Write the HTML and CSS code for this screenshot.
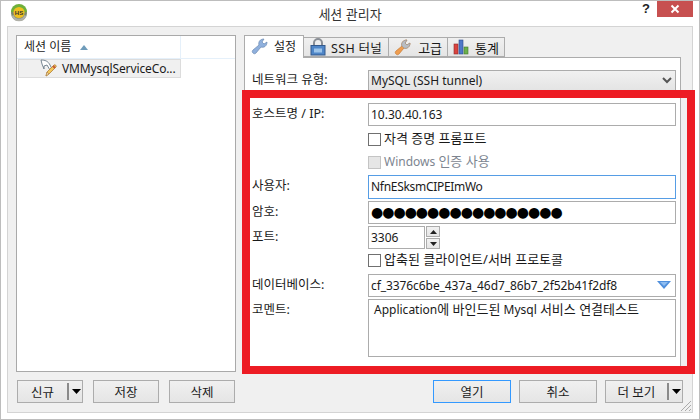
FILE: index.html
```html
<!DOCTYPE html>
<html lang="ko">
<head>
<meta charset="utf-8">
<title>세션 관리자</title>
<link rel="stylesheet" href="styles.css">
</head>
<body>
<div class="window">
  <header class="titlebar">
    <svg class="app-icon" width="18" height="18" viewBox="0 0 18 18"><circle cx="9" cy="9" r="8" fill="#7a8a70"/><path d="M1 8a8 8 0 0 1 16 0z" fill="#6fb03a"/><circle cx="9" cy="8.500" r="5.600" fill="#f0c020"/><path d="M1.500 12a8 8 0 0 0 15 0l-2-1a6 6 0 0 1-11 0z" fill="#b0b0a8"/><text x="9" y="11" class="app-icon-text" text-anchor="middle">HS</text></svg>
    <div class="title">세션 관리자</div>
    <div class="help">?</div>
    <div class="close"><svg width="10" height="10" viewBox="0 0 10 10"><path d="M1.500 1.500l7 7M8.500 1.500l-7 7" stroke="#fff" stroke-width="2"/></svg></div>
  </header>
  <main class="panel">
    <div class="content">
      <section class="list">
        <div class="list-head"><div class="list-col">세션 이름<svg class="sort" width="8" height="5" viewBox="0 0 8 5"><path d="M4 0l4 5H0z" fill="#6f9cba"/></svg></div></div>
        <div class="list-item">
          <svg class="item-icon" width="20" height="19" viewBox="0 0 20 19"><path d="M1 1c4 0 7 1 9 5l2 4-2 1-3-5-3 1 0 3-2-5z" fill="#fff" stroke="#6a7a88" stroke-width=".9"/><path d="M6 17l1-4 7-7c1-1 3 1 2 2l-7 7z" fill="#f3c75a" stroke="#b0803a" stroke-width=".8"/><path d="M6 17l1-4 2 2z" fill="#e8d8b8" stroke="#b0803a" stroke-width=".6"/><path d="M13 7l2 2" stroke="#c65a3a" stroke-width="2"/></svg>
          <span class="item-text">VMMysqlServiceCo...</span>
        </div>
      </section>
      <section class="tabs">
        <nav class="tabbar">
          <div class="tab active"><svg class="tab-icon" width="18" height="18" viewBox="0 0 18 18"><path d="M2 16c-1-1-1-2 0-3l6-5c-1-3 1-6 5-6l-2 3 2 2 3-2c0 4-3 6-6 5l-5 6c-1 1-2 1-3 0z" fill="#8fb0dd" stroke="#6a88b0" stroke-width=".7"/></svg><span>설정</span></div>
          <div class="tab tab-ssh"><svg class="tab-icon" width="18" height="18" viewBox="0 0 18 18"><path d="M5 8V5a4 4 0 0 1 8 0v3" fill="none" stroke="#8a8f96" stroke-width="2"/><rect x="2" y="7.500" width="14" height="9.500" fill="#4f86c8" stroke="#33598c"/><rect x="5" y="10.500" width="8" height="4" fill="#9cc4ea"/></svg><span class="wide">SSH 터널</span></div>
          <div class="tab tab-adv"><svg class="tab-icon" width="18" height="18" viewBox="0 0 18 18"><path d="M2 16c-1-1-1-2 0-3l6-5c-1-3 1-6 5-6l-2 3 2 2 3-2c0 4-3 6-6 5l-5 6c-1 1-2 1-3 0z" fill="#ef9d4f" stroke="#c67a34" stroke-width=".7"/><path d="M8 8c-1-3 1-6 5-6l-2 3 2 2 3-2c0 4-3 6-6 5z" fill="#b9bdc2" stroke="#8a8f96" stroke-width=".5"/></svg><span>고급</span></div>
          <div class="tab tab-stat"><svg class="tab-icon" width="16" height="16" viewBox="0 0 16 16"><rect x="1" y="5" width="4" height="10" fill="#d9433f" stroke="#8e2a28" stroke-width=".6"/><rect x="6" y="1" width="4" height="14" fill="#4f78c9" stroke="#2d4c8e" stroke-width=".6"/><rect x="11" y="8" width="4" height="7" fill="#6cb04c" stroke="#44782e" stroke-width=".6"/></svg><span>통계</span></div>
        </nav>
        <form class="pane">
          <div class="row row-net"><label class="label">네트워크 유형:</label><div class="field combo grad"><span>MySQL (SSH tunnel)</span><svg width="10" height="7" viewBox="0 0 10 7"><path d="M1 1l4 4 4-4" fill="none" stroke="#555" stroke-width="2"/></svg></div></div>
          <div class="row row-host"><label class="label">호스트명 / IP:</label><div class="field">10.30.40.163</div></div>
          <div class="row row-check"><span></span><div class="check"><i class="box"></i><span class="ko">자격 증명 프롬프트</span></div></div>
          <div class="row row-win"><span></span><div class="check off"><i class="box"></i><span>Windows <span class="ko">인증 사용</span></span></div></div>
          <div class="row row-user"><label class="label">사용자:</label><div class="field user">NfnESksmCIPEImWo</div></div>
          <div class="row row-pass"><label class="label">암호:</label><div class="field dots">●●●●●●●●●●●●●●●●●</div></div>
          <div class="row row-port"><label class="label">포트:</label><div class="port"><div class="field port-field">3306</div><div class="spin"><i class="spin-b"><svg width="7" height="4" viewBox="0 0 7 4"><path d="M3.500 0l3.500 4H0z" fill="#222"/></svg></i><i class="spin-b"><svg width="7" height="4" viewBox="0 0 7 4"><path d="M0 0h7L3.500 4z" fill="#222"/></svg></i></div></div></div>
          <div class="row row-comp"><span></span><div class="check"><i class="box"></i><span class="ko">압축된 클라이언트/서버 프로토콜</span></div></div>
          <div class="row row-db"><label class="label">데이터베이스:</label><div class="field combo"><span class="db-text">cf_3376c6be_437a_46d7_86b7_2f52b41f2df8</span><svg class="db-arrow" width="14" height="8" viewBox="0 0 14 8"><path d="M0 0h14L7 8z" fill="#4f8fdc"/><path d="M3 1h8L7 5z" fill="#8fbdf0"/></svg></div></div>
          <div class="row row-comment"><label class="label">코멘트:</label><div class="field memo"><span>Application<span class="ko">에 바인드된</span> Mysql <span class="ko">서비스 연결테스트</span></span></div></div>
        </form>
      </section>
    </div>
    <footer class="actions">
      <div class="group">
        <div class="btn split"><span class="btn-text">신규</span><i class="sep"></i><svg width="9" height="5" viewBox="0 0 9 5"><path d="M0 0h9L4.500 5z" fill="#000"/></svg></div>
        <div class="btn">저장</div>
        <div class="btn">삭제</div>
      </div>
      <div class="group group-right">
        <div class="btn wide-btn primary">열기</div>
        <div class="btn wide-btn">취소</div>
        <div class="btn wide-btn split"><span class="btn-text">더 보기</span><i class="sep"></i><svg width="9" height="5" viewBox="0 0 9 5"><path d="M0 0h9L4.500 5z" fill="#000"/></svg></div>
      </div>
    </footer>
    <svg class="grip" width="12" height="12" viewBox="0 0 12 12"><path d="M11 1L1 11M11 5l-6 6M11 9l-2 2" stroke="#aaa" stroke-width="1"/></svg>
  </main>
  <div class="highlight"></div>
</div>
</body>
</html>
```
FILE: styles.css
```css
* { box-sizing: border-box; }
html, body { margin: 0; padding: 0; }
body {
  width: 700px;
  height: 420px;
  overflow: hidden;
  font-family: "Noto Sans", "Noto Sans CJK KR", sans-serif;
  font-size: 12px;
  color: #1a1a1a;
  background: #fff;
}
.window {
  position: relative;
  width: 700px;
  height: 420px;
  border: 1px solid #bdbdbd;
  background: #fff;
  display: flex;
  flex-direction: column;
  padding: 0 6px 6px;
}
.titlebar {
  height: 25px;
  flex: none;
  display: flex;
  align-items: center;
  position: relative;
}
.app-icon { margin: -1px 0 0 3px; }
.app-icon-text { font: bold 6px "Liberation Sans", sans-serif; fill: #333; }
.title {
  position: absolute;
  left: 0;
  right: 0;
  top: 3px;
  text-align: center;
  font-size: 13px;
  color: #333;
}
.help {
  position: absolute;
  right: 43px;
  top: 0;
  font: bold 13px/16px "Liberation Sans", sans-serif;
  color: #222;
}
.close {
  position: absolute;
  right: 0;
  top: 0;
  width: 36px;
  height: 16px;
  background: #c75050;
  display: flex;
  align-items: center;
  justify-content: center;
}
.panel {
  flex: 1;
  position: relative;
  border: 1px solid #d4d4d4;
  background: #f0f0f0;
  padding: 8px;
  display: flex;
  flex-direction: column;
}
.content { display: flex; flex: 1; min-height: 0; }
.list {
  width: 220px;
  height: 337px;
  margin-right: 8px;
  background: #fff;
  border: 1px solid #a9a9a9;
  flex: none;
}
.list-head { height: 23px; border-bottom: 1px solid #e5f0fa; }
.list-col {
  width: 164px;
  height: 22px;
  border-right: 1px solid #e5f0fa;
  padding-left: 7px;
  line-height: 20px;
  display: flex;
  align-items: center;
}
.sort { margin-left: 9px; }
.list-item {
  height: 19px;
  margin-left: 1px;
  width: 163px;
  background: #f0f0f0;
  border: 1px solid #dcdcdc;
  display: flex;
  align-items: center;
  white-space: nowrap;
}
.item-icon { margin-left: 21px; margin-right: 2px; flex: none; }
.item-text { letter-spacing: -.12px; }
.tabs { width: 437px; flex: none; position: relative; display: flex; flex-direction: column; }
.tabbar { display: flex; height: 22px; align-items: flex-end; flex: none; position: relative; z-index: 1; }
.tab {
  height: 20px;
  display: flex;
  align-items: center;
  padding: 0 4px;
  background: linear-gradient(#f0f0f0, #e5e5e5);
  border: 1px solid #acacac;
  border-left: 0;
  gap: 4px;
  font-size: 12.5px;
  white-space: nowrap;
}
.tab .wide { letter-spacing: .3px; }
.tab.active {
  height: 23px;
  margin-bottom: -1px;
  background: #fff;
  border-bottom: 0;
  border-left: 1px solid #acacac;
  padding: 0 7px 2px 6px;
  gap: 5px;
  font-size: 12px;
}
.tab-ssh { padding: 0 6px 0 5px; }
.tab-adv { gap: 6px; padding: 0 5px 0 5px; font-size: 13px; }
.tab-stat { gap: 6px; padding: 0 5px 0 5px; font-size: 13px; }
.tab-icon { flex: none; }
.pane {
  height: 315px;
  border: 1px solid #acacac;
  border-bottom: 0;
  background: #fff;
  padding: 12px 4px 0 7px;
  display: flex;
  flex-direction: column;
}
.row { display: grid; grid-template-columns: 116px 1fr; align-items: center; }
.label { font-size: 12.5px; line-height: 16px; white-space: nowrap; margin-bottom: 2px; }
.field {
  border: 1px solid #acacac;
  height: 100%;
  padding: 0 5px 1px 2px;
  background: #fff;
  display: flex;
  align-items: center;
  white-space: nowrap;
  overflow: hidden;
}
.ko { font-size: 13px; }
.combo { justify-content: space-between; }
.grad { background: linear-gradient(#f1f1f1, #e4e4e4); padding-right: 3px; }
.row-net { height: 21px; }
.row-host { height: 23px; margin-top: 12px; }
.row-check { height: 14px; margin-top: 6px; }
.row-win { height: 14px; margin-top: 9px; }
.row-user { height: 24px; margin-top: 6px; }
.row-pass { height: 23px; margin-top: 2px; }
.row-port { height: 23px; margin-top: 2px; }
.row-comp { height: 14px; margin-top: 4px; }
.row-db { height: 23px; margin-top: 7px; }
.row-comment { height: 58px; margin-top: 2px; align-items: start; }
.row-comment .label { margin-top: 3px; }
.check { display: flex; align-items: center; gap: 3px; line-height: 14px; white-space: nowrap; }
.check .ko, .check > span { position: relative; top: -1px; }
.check > span .ko { top: 0; }
.box { width: 13px; height: 13px; border: 1px solid #707070; background: #fff; flex: none; display: block; }
.off { color: #7d8590; }
.off .box { border-color: #c4c4c4; background: #e6e6e6; }
.user { border-color: #569de5; letter-spacing: -.3px; }
.db-text { letter-spacing: -.08px; }
.dots { font-size: 14px; color: #000; padding-left: 2px; letter-spacing: -1px; font-family: "DejaVu Sans", sans-serif; }
.port { display: flex; height: 100%; gap: 1px; }
.port-field { width: 57px; }
.spin { display: flex; flex-direction: column; gap: 1px; }
.spin-b {
  width: 14px;
  height: 11px;
  border: 1px solid #acacac;
  background: linear-gradient(#f2f2f2, #e5e5e5);
  display: flex;
  align-items: center;
  justify-content: center;
}
.db-arrow { margin-right: -1px; }
.memo { align-items: flex-start; padding: 0 5px; line-height: 18px; }
.actions {
  flex: none;
  height: 23px;
  margin-top: 8px;
  margin-bottom: 1px;
  display: flex;
  justify-content: space-between;
  padding: 0 1px;
}
.group { display: flex; gap: 10px; }
.group-right { gap: 8px; }
.btn {
  width: 66px;
  height: 23px;
  border: 1px solid #acacac;
  background: linear-gradient(#f0f0f0, #e5e5e5);
  display: flex;
  align-items: center;
  justify-content: center;
  font-size: 12.5px;
}
.wide-btn { width: 78px; }
.primary { border-color: #3399ff; }
.split { justify-content: flex-start; padding-right: 1px; }
.btn-text { flex: 1; text-align: center; }
.sep { width: 2px; height: 17px; background: #8a8a8a; margin-right: 3px; flex: none; }
.grip { position: absolute; right: 0; bottom: 0; }
.highlight {
  position: absolute;
  left: 241px;
  top: 89px;
  width: 453px;
  height: 284px;
  border: 8px solid #ed1c24;
}
```
